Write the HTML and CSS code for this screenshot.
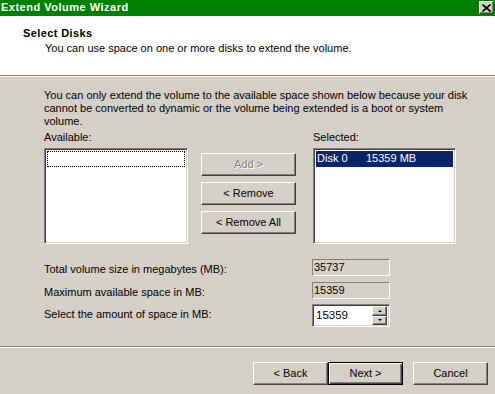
FILE: index.html
```html
<!DOCTYPE html>
<html>
<head>
<meta charset="utf-8">
<link rel="stylesheet" href="styles.css">
</head>
<body>
<div class="window">
  <div class="titlebar">
    <span class="title">Extend Volume Wizard</span>
    <span class="close"><svg width="9" height="8" viewBox="0 0 9 8"><path d="M0.5 0.5 L8.5 7.5 M8.5 0.5 L0.5 7.5" stroke="#000" stroke-width="1.6" fill="none"/></svg></span>
  </div>
  <div class="header">
    <div class="h-title">Select Disks</div>
    <div class="h-sub">You can use space on one or more disks to extend the volume.</div>
  </div>
  <div class="sep"></div>
  <div class="content">
    <p class="intro">You can only extend the volume to the available space shown below because your disk<br>cannot be converted to dynamic or the volume being extended is a boot or system<br>volume.</p>
    <div class="lists">
      <div class="label">Available:</div>
      <div></div>
      <div class="label">Selected:</div>
      <div class="listbox"><div class="row focus"></div></div>
      <div class="btncol">
        <button class="btn disabled">Add &gt;</button>
        <button class="btn">&lt; Remove</button>
        <button class="btn">&lt; Remove All</button>
      </div>
      <div class="listbox"><div class="row sel"><span class="c1">Disk 0</span><span>15359 MB</span></div></div>
    </div>
    <div class="fields">
      <div class="field f1"><span class="flabel">Total volume size in megabytes (MB):</span><div class="ro">35737</div></div>
      <div class="field f2"><span class="flabel">Maximum available space in MB:</span><div class="ro">15359</div></div>
      <div class="field f3"><span class="flabel">Select the amount of space in MB:</span>
        <div class="spin"><span class="spinval">15359</span>
          <div class="spinbtns"><span class="sb up"><i></i></span><span class="sb down"><i></i></span></div>
        </div>
      </div>
    </div>
  </div>
  <div class="sep"></div>
  <div class="footer">
    <button class="btn fbtn">&lt; Back</button>
    <button class="btn fbtn default">Next &gt;</button>
    <button class="btn fbtn cancel">Cancel</button>
  </div>
</div>
</body>
</html>
```
FILE: styles.css
```css
* { box-sizing: border-box; }
html, body { margin: 0; padding: 0; }
body {
  width: 495px;
  height: 394px;
  overflow: hidden;
  background: #d4d0c8;
  font-family: "Liberation Sans", Arial, sans-serif;
  font-size: 11px;
  color: #000;
}
.window {
  width: 495px;
  height: 394px;
  display: flex;
  flex-direction: column;
  background: #d4d0c8;
}
.titlebar {
  height: 16px;
  background: #008000;
  display: flex;
  align-items: flex-start;
  justify-content: space-between;
}
.title {
  color: #fff;
  font-weight: bold;
  font-size: 11px;
  line-height: 14px;
  padding-left: 1px;
  letter-spacing: 0.5px;
}
.close {
  width: 15px;
  height: 13px;
  margin-top: 1px;
  margin-right: 1px;
  background: #d4d0c8;
  border: 1px solid;
  border-color: #fff #404040 #404040 #fff;
  box-shadow: inset -1px -1px #808080;
  display: flex;
  align-items: center;
  justify-content: center;
}
.close svg { display: block; }
.header {
  height: 59px;
  background: #fff;
  padding: 11px 0 0 23px;
}
.h-title {
  font-weight: bold;
  line-height: 13px;
  letter-spacing: 0.4px;
}
.h-sub {
  margin-top: 2px;
  padding-left: 22px;
  line-height: 13px;
}
.sep {
  height: 2px;
  border-top: 1px solid #808080;
  border-bottom: 1px solid #fff;
}
.content {
  flex: 1;
  padding: 12px 0 0 44px;
}
.intro {
  margin: 0;
  line-height: 13px;
}
.lists {
  margin-top: 3px;
  display: grid;
  grid-template-columns: 144px 99px 143px;
  column-gap: 13px;
}
.label {
  line-height: 13px;
  margin-bottom: 4px;
}
.listbox {
  height: 96px;
  background: #fff;
  border: 1px solid;
  border-color: #808080 #fff #fff #808080;
  box-shadow: inset 1px 1px #404040, inset -1px -1px #d4d0c8;
  padding: 2px;
}
.row {
  height: 16px;
  line-height: 15px;
  display: flex;
}
.row.focus {
  border: 1px dotted #000;
}
.row.sel {
  background: #0a246a;
  color: #fff;
  padding-left: 1px;
}
.row .c1 { width: 49px; }
.btncol {
  width: 95px;
  display: flex;
  flex-direction: column;
  gap: 6px;
  padding-top: 5px;
}
.btn {
  font-family: "Liberation Sans", Arial, sans-serif;
  font-size: 11px;
  color: #000;
  background: #d4d0c8;
  height: 23px;
  padding: 0;
  border: 1px solid;
  border-color: #fff #404040 #404040 #fff;
  box-shadow: inset -1px -1px #808080;
  border-radius: 0;
  line-height: 19px;
  text-align: center;
}
.btn.disabled {
  color: #808080;
  text-shadow: 1px 1px #fff;
}
.fields {
  margin-top: 15px;
  width: 346px;
}
.field {
  display: flex;
  align-items: flex-start;
  justify-content: space-between;
}
.field.f1 { height: 23px; }
.field.f2 { height: 22px; }
.field.f3 { height: 23px; }
.flabel {
  line-height: 13px;
  margin-top: 4px;
}
.ro {
  width: 78px;
  height: 17px;
  border: 1px solid;
  border-color: #808080 #fff #fff #808080;
  line-height: 15px;
  padding-left: 1px;
}
.spin {
  width: 78px;
  height: 23px;
  background: #fff;
  border: 1px solid;
  border-color: #808080 #fff #fff #808080;
  box-shadow: inset 1px 1px #404040, inset -1px -1px #d4d0c8;
  display: flex;
  align-items: center;
  justify-content: space-between;
  padding: 2px 2px 2px 3px;
  font-size: 11.5px;
}
.spinval { line-height: 17px; }
.spinbtns {
  display: flex;
  flex-direction: column;
  width: 15px;
  height: 19px;
}
.sb {
  flex: 1;
  background: #d4d0c8;
  border: 1px solid;
  border-color: #fff #404040 #404040 #fff;
  box-shadow: inset -1px -1px #808080;
  display: flex;
  align-items: center;
  justify-content: center;
}
.sb i {
  width: 0;
  height: 0;
  border-left: 2px solid transparent;
  border-right: 2px solid transparent;
}
.sb.up i { border-bottom: 2px solid #000; }
.sb.down i { border-top: 2px solid #000; }
.footer {
  height: 46px;
  display: flex;
  justify-content: flex-end;
  padding: 14px 7px 0 0;
}
.fbtn {
  width: 75px;
  height: 23px;
}
.fbtn.default {
  border: 1px solid #000;
  box-shadow: inset 1px 1px #fff, inset -1px -1px #404040, inset -2px -2px #808080;
}
.fbtn.cancel { margin-left: 10px; }
```
